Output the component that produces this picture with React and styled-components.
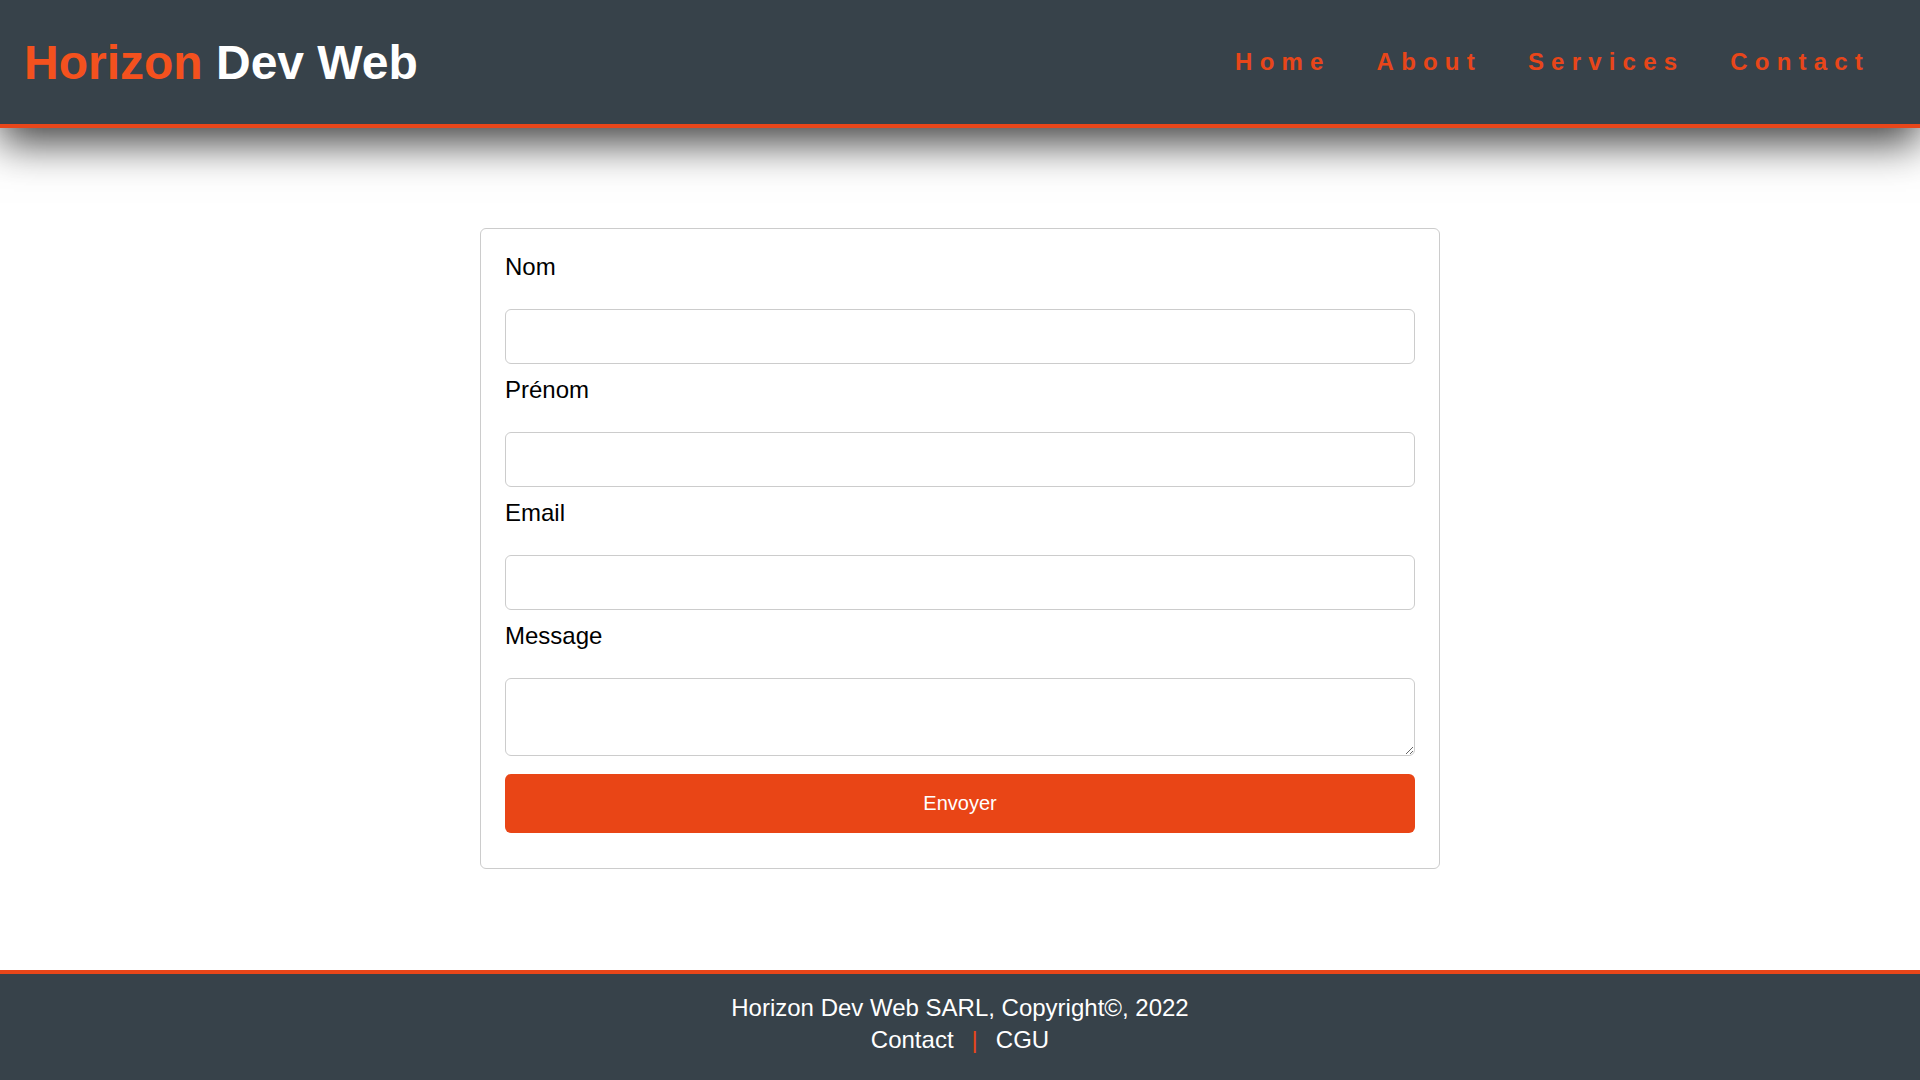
import React from "react";
import styled, { createGlobalStyle } from "styled-components";

const GlobalStyle = createGlobalStyle`
  * { box-sizing: border-box; }
  html, body { margin: 0; padding: 0; }
  body {
    font-family: "Liberation Sans", Arial, sans-serif;
    background: #ffffff;
    color: #000;
  }
`;

const Page = styled.div`
  display: flex;
  flex-direction: column;
  min-height: 100vh;
`;

const Header = styled.header`
  position: relative;
  z-index: 2;
  height: 128px;
  display: flex;
  align-items: center;
  justify-content: space-between;
  background: #37424a;
  border-bottom: 4px solid #e8461a;
  padding: 0 50px 0 24px;
  box-shadow: 0 15px 40px rgba(0, 0, 0, 0.75);
`;

const Logo = styled.div`
  font-size: 48px;
  font-weight: 700;
  color: #ffffff;
  white-space: nowrap;
`;

const Accent = styled.span`
  color: #f4511e;
`;

const Nav = styled.nav`
  display: flex;
  align-items: center;
  gap: 46px;
`;

const NavLink = styled.a`
  font-size: 24px;
  font-weight: 700;
  letter-spacing: 7.2px;
  color: #e8461a;
  text-decoration: none;
`;

const Main = styled.main`
  flex: 1;
  display: flex;
  justify-content: center;
  padding: 100px 0 101px;
`;

const Card = styled.form`
  width: 960px;
  border: 1px solid #cccccc;
  border-radius: 6px;
  padding: 24px 24px 35px;
  display: flex;
  flex-direction: column;
`;

const Label = styled.label`
  display: block;
  font-size: 24px;
  line-height: 27px;
  color: #000;
  margin-bottom: 29px;
`;

const Input = styled.input`
  display: block;
  width: 100%;
  height: 55px;
  border: 1px solid #cccccc;
  border-radius: 6px;
  font-size: 20px;
  padding: 0 12px;
  margin-bottom: 12px;
  font-family: inherit;
  outline: none;
`;

const TextArea = styled.textarea`
  display: block;
  width: 100%;
  height: 78px;
  border: 1px solid #cccccc;
  border-radius: 6px;
  font-size: 20px;
  padding: 12px;
  margin-bottom: 18px;
  font-family: inherit;
  resize: vertical;
  outline: none;
`;

const Button = styled.button`
  display: block;
  width: 100%;
  height: 59px;
  border: none;
  border-radius: 6px;
  background: #e94516;
  color: #ffffff;
  font-family: inherit;
  font-size: 20px;
  cursor: pointer;
`;

const Footer = styled.footer`
  background: #37424a;
  border-top: 4px solid #e8461a;
  padding: 18px 0 24px;
  text-align: center;
  color: #ffffff;
  font-size: 24px;
  line-height: 32px;
`;

const FooterLine = styled.p`
  margin: 0;
`;

const FooterLink = styled.a`
  color: #ffffff;
  text-decoration: none;
`;

const Sep = styled.span`
  color: #e8461a;
  margin: 0 18px;
`;

const fields = [
  { id: "nom", label: "Nom", type: "text" },
  { id: "prenom", label: "Prénom", type: "text" },
  { id: "email", label: "Email", type: "email" },
];

export default function App() {
  return (
    <Page>
      <GlobalStyle />
      <Header>
        <Logo>
          <Accent>Horizon</Accent> Dev Web
        </Logo>
        <Nav>
          <NavLink href="#">Home</NavLink>
          <NavLink href="#">About</NavLink>
          <NavLink href="#">Services</NavLink>
          <NavLink href="#">Contact</NavLink>
        </Nav>
      </Header>
      <Main>
        <Card onSubmit={(e) => e.preventDefault()}>
          {fields.map((f) => (
            <React.Fragment key={f.id}>
              <Label htmlFor={f.id}>{f.label}</Label>
              <Input id={f.id} type={f.type} />
            </React.Fragment>
          ))}
          <Label htmlFor="message">Message</Label>
          <TextArea id="message" />
          <Button type="submit">Envoyer</Button>
        </Card>
      </Main>
      <Footer>
        <FooterLine>Horizon Dev Web SARL, Copyright©, 2022</FooterLine>
        <FooterLine>
          <FooterLink href="#">Contact</FooterLink>
          <Sep>|</Sep>
          <FooterLink href="#">CGU</FooterLink>
        </FooterLine>
      </Footer>
    </Page>
  );
}
